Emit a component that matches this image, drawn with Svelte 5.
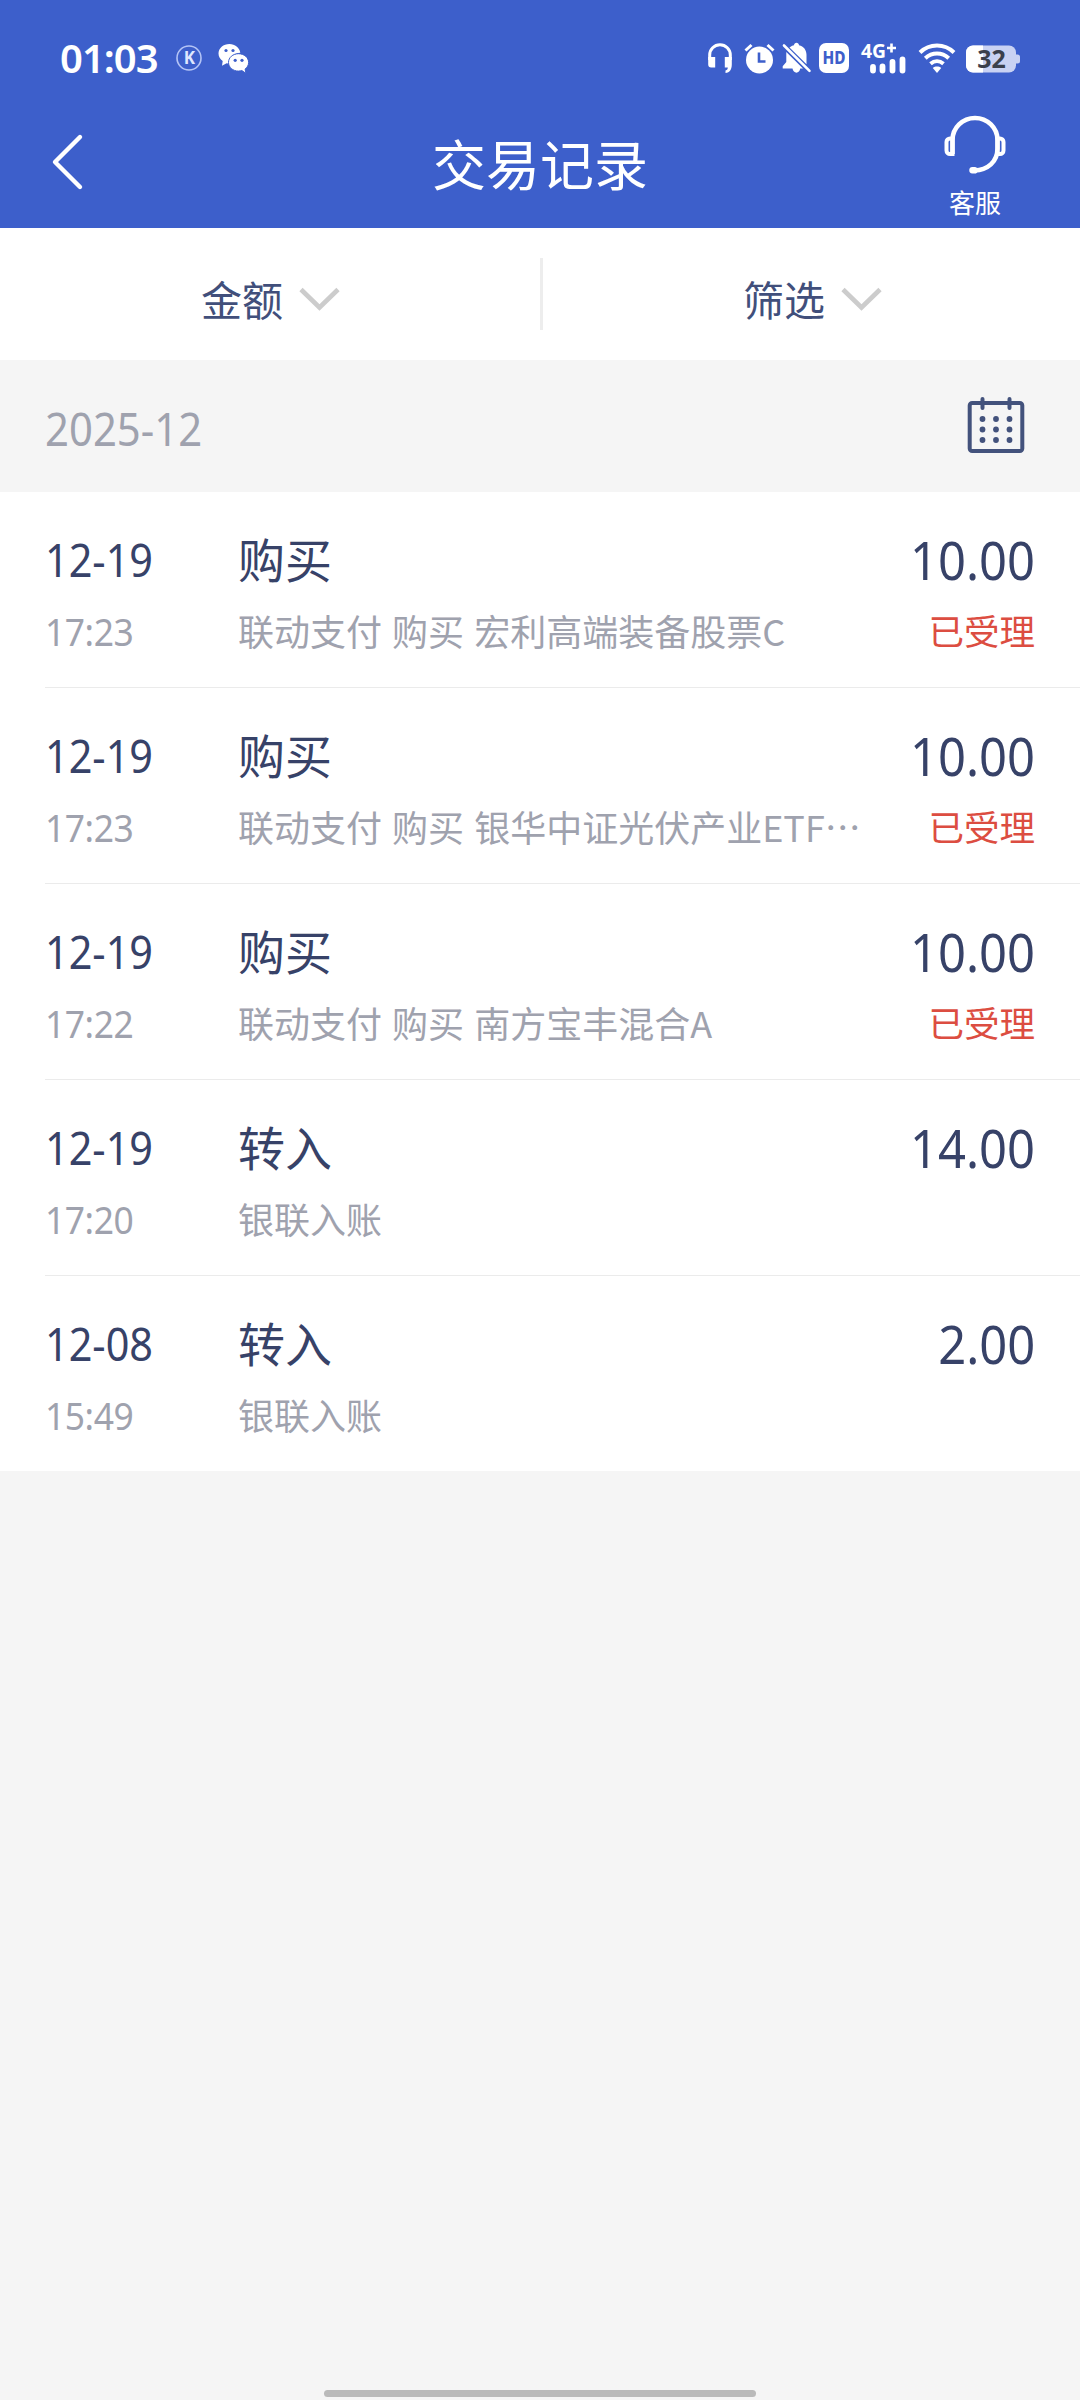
<script>
    /* ========================= Data ========================= */

    let month = $state("2025-12");

    const filters = ["金额", "筛选"];

    let records = $state([
        { date: "12-19", time: "17:23", type: "购买", detail: "联动支付 购买 宏利高端装备股票C", amount: "10.00", status: "已受理" },
        { date: "12-19", time: "17:23", type: "购买", detail: "联动支付 购买 银华中证光伏产业ETF…", amount: "10.00", status: "已受理" },
        { date: "12-19", time: "17:22", type: "购买", detail: "联动支付 购买 南方宝丰混合A", amount: "10.00", status: "已受理" },
        { date: "12-19", time: "17:20", type: "转入", detail: "银联入账", amount: "14.00", status: "" },
        { date: "12-08", time: "15:49", type: "转入", detail: "银联入账", amount: "2.00", status: "" },
    ]);
</script>

<main class="page" lang="zh-CN">
    <header>
        <div class="status-bar">
            <span class="clock">01:03</span>
            <svg class="k-icon" width="26" height="26" viewBox="0 0 26 26">
                <circle cx="13" cy="13" r="12" fill="none" stroke="#b4c4f6" stroke-width="1.6" />
                <text x="13.4" y="19" text-anchor="middle" font-size="17" font-weight="700" fill="#dfe6ff">K</text>
            </svg>
            <svg class="wechat-icon" width="31" height="31" viewBox="0 0 31 31">
                <path fill="#fff" d="M11.500 1C5.300 1 .5 5.200.5 10.600c0 3.200 1.700 5.800 4.200 7.500L4 22.800l4.600-2.600c1.200.3 2.300.4 3.500.3C12 14 16 10 22.300 9.700 21.500 4.600 17 1 11.500 1z" />
                <path fill="#fff" stroke="#3d5fcb" stroke-width="1" d="M20.500 10.700c-5.600 0-10 3.800-10 8.700s4.400 8.700 10 8.700c1.200 0 2.300-.2 3.400-.5l4 2.700-.8-4.300c2.200-1.600 3.500-3.900 3.500-6.600 0-4.900-4.500-8.700-10.100-8.700z" />
                <circle cx="8" cy="7.500" r="1.600" fill="#3d5fcb" />
                <circle cx="15" cy="7.500" r="1.600" fill="#3d5fcb" />
                <circle cx="17.200" cy="17.300" r="1.600" fill="#3d5fcb" />
                <circle cx="24" cy="17.300" r="1.600" fill="#3d5fcb" />
            </svg>
            <div class="status-right">
                <svg class="headphones" width="26" height="32" viewBox="0 0 26 32">
                    <path d="M2.700 18v-5a10.300 10.300 0 0 1 20.600 0v5" fill="none" stroke="#fff" stroke-width="3" />
                    <path d="M1.200 15h7v10.500H4.200a3 3 0 0 1-3-3zM17.800 15h7v7.500c0 5-2 8-6.300 8.500v-2.500c1.700-.4 2.300-1.500 2.300-3h-3z" fill="#fff" />
                </svg>
                <svg class="alarm" width="31" height="32" viewBox="0 0 31 32">
                    <circle cx="15.500" cy="18" r="13.500" fill="#fff" />
                    <path d="M1.500 8.500l6-5.500M29.500 8.500l-6-5.500" stroke="#fff" stroke-width="3" />
                    <path d="M15 10.500v9h6.500" fill="none" stroke="#3d5fcb" stroke-width="2.600" />
                </svg>
                <svg class="bell" width="29" height="32" viewBox="0 0 29 32">
                    <path d="M7.500 5.600C9 4.200 10.500 3.500 12 3.300 12-.2 17-.2 17 3.300c4.700 1 7.500 4.700 7.500 9.500v9.500zM4.300 10 21 26.500h-2.800c-.5 5.500-6.900 5.500-7.700 0H.7v-2.300l3.600-4.200z" fill="#fff" />
                    <path d="M2 3.500l25.500 25.300" stroke="#fff" stroke-width="2.600" stroke-linecap="round" />
                </svg>
                <svg class="hd" width="30" height="32" viewBox="0 0 30 32">
                    <rect y="1" width="30" height="30" rx="7" fill="#fff" />
                    <text x="3.500" y="22" font-size="17" font-weight="800" fill="#3d5fcb" textLength="23" lengthAdjust="spacingAndGlyphs">HD</text>
                </svg>
                <svg class="signal" width="46" height="48" viewBox="0 -8 46 48">
                    <text x="0" y="15.500" font-size="20" font-weight="700" fill="#fff" textLength="25" lengthAdjust="spacingAndGlyphs">4G</text>
                    <path d="M26 6h9M30.500 1.500v9" stroke="#fff" stroke-width="2.600" />
                    <path d="M12 25v3.500M21.500 24.500v4M31.500 20v8.500M41.500 17.500v11" stroke="#fff" stroke-width="5.800" stroke-linecap="round" />
                </svg>
                <svg class="wifi" width="38" height="32" viewBox="0 0 38 32">
                    <path d="M2 10.500c9.500-9.300 24.500-9.300 34 0M7.300 16.300c6.700-6.300 16.700-6.300 23.400 0M12.500 21.700c4-3.400 9-3.400 13 0" fill="none" stroke="#fff" stroke-width="4" />
                    <path d="M14.800 26c2.500-1.900 5.900-1.900 8.400 0L19 31z" fill="#fff" />
                </svg>
                <svg width="55" height="40" viewBox="0 -4 55 40">
                    <clipPath id="charge"><rect x="0" y="0" width="17" height="32" /></clipPath>
                    <rect y="3.500" width="50" height="27" rx="7" fill="#c9d2f3" />
                    <rect y="3.500" width="50" height="27" rx="7" fill="#fff" clip-path="url(#charge)" />
                    <path d="M50 12.500h1.500a2.500 2.500 0 0 1 2.500 2.500v4a2.500 2.500 0 0 1-2.500 2.500H50z" fill="#c9d2f3" />
                    <text x="25.500" y="26" text-anchor="middle" font-size="25" font-weight="700" fill="#3b404c">32</text>
                </svg>
            </div>
        </div>
        <div class="nav-bar">
            <svg class="back" width="36" height="60" viewBox="0 0 36 60">
                <path d="M31 5 6 30l25 25" fill="none" stroke="#fff" stroke-width="4.400" stroke-linecap="round" stroke-linejoin="round" />
            </svg>
            <h1>交易记录</h1>
            <div class="service">
                <svg width="62" height="60" viewBox="0 0 62 60">
                    <path d="M8.500 38V24a22.500 22 0 0 1 45 0v8.500c0 13.500-10 21.500-23 22" fill="none" stroke="#fff" stroke-width="4.600" />
                    <path d="M30.500 54.300l-2-.1" stroke="#fff" stroke-width="6.500" stroke-linecap="round" />
                    <path d="M8.500 38H6a3.500 3.500 0 0 1-3.500-3.500V26A3.500 3.500 0 0 1 6 22.500h2.500zM53.500 22.500H56a3.500 3.500 0 0 1 3.500 3.500v8.500A3.500 3.500 0 0 1 56 38h-2.500z" fill="none" stroke="#fff" stroke-width="4" />
                </svg>
                <span>客服</span>
            </div>
        </div>
    </header>

    <div class="filters">
        {#each filters as filter}
            <div class="filter">
                <span>{filter}</span>
                <svg width="40" height="26" viewBox="0 0 40 26">
                    <path d="M2 2.500 20.500 20.500 39 2.500" fill="none" stroke="#ccc" stroke-width="4.600" />
                </svg>
            </div>
        {/each}
    </div>

    <div class="month">
        <span>{month}</span>
        <svg width="58" height="60" viewBox="0 0 58 60">
            <rect x="2.700" y="8" width="52.600" height="48" rx="2.500" fill="none" stroke="#43527c" stroke-width="4" />
            <path d="M15.500 4v9M42.500 4v9" stroke="#43527c" stroke-width="4" stroke-linecap="round" />
            {#each [24, 34.5, 45] as y}
                {#each [15.5, 29, 42.5] as x}
                    <circle cx={x} cy={y} r="2.900" fill="#43527c" />
                {/each}
            {/each}
        </svg>
    </div>

    <ul>
        {#each records as record}
            <li>
                <span class="date">{record.date}</span>
                <span class="type">{record.type}</span>
                <span class="amount">{record.amount}</span>
                <span class="time">{record.time}</span>
                <span class="detail">{record.detail}</span>
                <span class="state">{record.status}</span>
            </li>
        {/each}
    </ul>

    <div class="home-bar"></div>
</main>

<style>
    :global(body) {
        background: #f5f5f5;
    }

    .page {
        display: flex;
        flex-direction: column;
        width: 1080px;
        height: 2400px;
        background: #f5f5f5;
        font-family: "Noto Sans CJK SC", sans-serif;
        & svg {
            display: block;
            flex: none;
            overflow: visible;
            font-family: "Noto Sans", sans-serif;
        }
    }

    header {
        height: 228px;
        background: #3d5fcb;
        color: #fff;
    }

    .status-bar {
        display: flex;
        align-items: center;
        height: 116px;
        padding: 0 59px 0 60px;
        & .clock {
            width: 116px;
            font: 600 40px/60px "Noto Sans", sans-serif;
            letter-spacing: -1px;
        }
        & .wechat-icon {
            margin-left: 16px;
        }
        & .status-right {
            display: flex;
            align-items: center;
            margin-left: auto;
        }
        & .headphones {
            margin-right: 11px;
        }
        & .alarm {
            margin-right: 7px;
        }
        & .bell {
            margin-right: 8px;
        }
        & .hd {
            margin-right: 12px;
        }
        & .signal {
            margin-right: 11px;
        }
        & .wifi {
            margin-right: 10px;
        }
    }

    .nav-bar {
        display: grid;
        grid-template-columns: 150px 1fr 150px;
        height: 112px;
        & .back {
            margin: 16px 0 0 49px;
        }
        & h1 {
            margin: 0;
            text-align: center;
            font-size: 54px;
            line-height: 93px;
            font-weight: 400;
        }
        & .service {
            display: flex;
            flex-direction: column;
            align-items: center;
            margin-left: -60px;
            width: 210px;
            font-size: 26px;
            line-height: 30px;
        }
        & .service svg {
            margin-bottom: 11px;
        }
    }

    .filters {
        display: flex;
        height: 132px;
        background: #fff;
        color: #414f7b;
        font-size: 41px;
        line-height: 60px;
        & .filter {
            display: flex;
            flex: 1;
            justify-content: center;
            align-items: center;
            gap: 16px;
        }
        & .filter span {
            padding-top: 8px;
        }
        & .filter svg {
            margin-top: 12px;
        }
        & .filter + .filter::before {
            content: "";
            width: 3px;
            height: 72px;
            margin-right: auto;
            background: #ededed;
        }
        & .filter + .filter svg {
            margin-right: auto;
            padding-right: 15px;
        }
    }

    .month {
        display: flex;
        justify-content: space-between;
        align-items: center;
        height: 132px;
        padding: 0 55px 0 45px;
        color: #9fa2ae;
        font: 400 45px/60px "Noto Sans", sans-serif;
        & span {
            padding-top: 5px;
            transform: scaleX(0.93);
            transform-origin: left;
        }
        & svg {
            margin-bottom: 3px;
        }
    }

    ul {
        margin: 0;
        padding: 0;
        background: #fff;
        list-style: none;
    }

    li {
        display: grid;
        grid-template-columns: 193px 1fr auto;
        grid-template-rows: 72px 70px;
        height: 164px;
        margin-left: 45px;
        padding: 31px 45px 0 0;
        color: #374268;
        white-space: nowrap;
        & + li {
            border-top: 1px solid #ebebeb;
        }
        & .date,
        & .time {
            font-family: "Noto Sans", sans-serif;
            transform: scaleX(0.92);
            transform-origin: left;
        }
        & .date {
            font-size: 45px;
            line-height: 74px;
        }
        & .type {
            font-size: 47px;
            line-height: 70px;
        }
        & .amount {
            font: 400 52px/74px "Noto Sans", sans-serif;
            text-align: right;
            transform: scaleX(0.94);
            transform-origin: right;
        }
        & .time,
        & .detail,
        & .state {
            line-height: 70px;
        }
        & .time {
            color: #9fa2ae;
            font-size: 38.5px;
            line-height: 72px;
            letter-spacing: -0.5px;
        }
        & .detail {
            color: #9fa2ae;
            font-size: 36px;
            word-spacing: 2px;
        }
        & .state {
            color: #dc4d41;
            font-size: 35.5px;
            text-align: right;
        }
    }

    .home-bar {
        width: 432px;
        height: 7px;
        margin: auto auto 3px;
        border-radius: 4px;
        background: #bababa;
    }
</style>
